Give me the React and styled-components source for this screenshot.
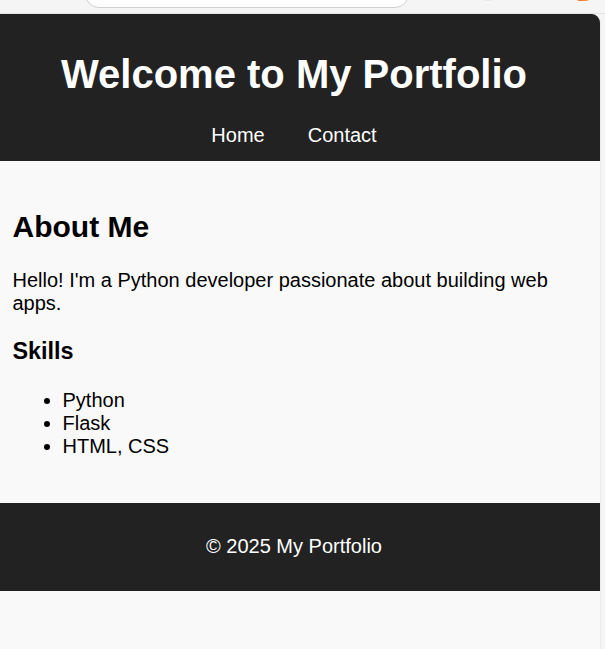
import React from 'react'
import styled, { createGlobalStyle } from 'styled-components'

const GlobalStyle = createGlobalStyle`
    html, body {
        margin: 0;
        padding: 0;
        background: #f3f3f3;
        font-family: "Liberation Sans", Arial, sans-serif;
    }
`;

// browser chrome sliver that shows at the very top of the shot
const TopBar = styled.div`
    height: 14px;
    border-bottom: 1px solid #e4e4e4;
    background: #f5f5f5;
    display: flex;
    align-items: flex-end;
    overflow: hidden;
    padding-bottom: 5px;
    box-sizing: border-box;
`;

const SearchPill = styled.div`
    margin-left: 85px;
    width: 324px;
    height: 30px;
    flex-shrink: 0;
    background: #fff;
    border: 1px solid #cfcfcf;
    border-radius: 14px;
    box-sizing: border-box;
`;

const ChromeCircle = styled.div`
    margin-left: 68px;
    width: 20px;
    height: 20px;
    flex-shrink: 0;
    border-radius: 50%;
    border: 1px solid #e6e6e6;
    background: #fafafa;
    margin-bottom: 7px;
`;

const ChromeBadge = styled.div`
    margin-left: 77px;
    width: 14px;
    height: 8px;
    flex-shrink: 0;
    border-radius: 0 0 4px 4px;
    background: linear-gradient(90deg, #f05a28, #f7b24a);
    margin-bottom: 7px;
`;

const Frame = styled.div`
    padding-right: 4px;
    background: #f5f5f5;
`;

const Page = styled.div`
    background: #f9f9f9;
    border-top-right-radius: 9px;
    overflow: hidden;
    min-height: 635px;
    border-right: 1px solid #ececec;
`;

const Header = styled.header`
    background: #222;
    color: #fff;
    text-align: center;
    padding: 38px 12px 14px 0;
`;

const Title = styled.h1`
    font-size: 40px;
    font-weight: bold;
    margin: 0 0 26.8px;
`;

const Nav = styled.nav`
    display: flex;
    justify-content: center;
    gap: 43px;
`;

const NavLink = styled.a`
    color: #fff;
    text-decoration: none;
    font-size: 20px;
`;

const Main = styled.main`
    padding: 49px 12.5px 25px;
    color: #000;
`;

const Heading = styled.h2`
    font-size: 30px;
    margin: 0 0 25px;
`;

const Text = styled.p`
    font-size: 20px;
    margin: 0 0 20px;
`;

const SubHeading = styled.h3`
    font-size: 23.4px;
    margin: 23.4px 0;
`;

const SkillList = styled.ul`
    font-size: 20px;
    margin: 0 0 20px;
    padding-left: 50px;
`;

const Footer = styled.footer`
    background: #222;
    color: #fff;
    text-align: center;
    font-size: 20px;
    padding: 32.5px 12px 32.5px 0;
`;

const skills = ['Python', 'Flask', 'HTML, CSS']

const App = () => (
    <>
        <GlobalStyle />
        <TopBar>
            <SearchPill />
            <ChromeCircle />
            <ChromeBadge />
        </TopBar>
        <Frame>
            <Page>
                <Header>
                    <Title>Welcome to My Portfolio</Title>
                    <Nav>
                        <NavLink href="#">Home</NavLink>
                        <NavLink href="#">Contact</NavLink>
                    </Nav>
                </Header>
                <Main>
                    <Heading>About Me</Heading>
                    <Text>Hello! I'm a Python developer passionate about building web apps.</Text>
                    <SubHeading>Skills</SubHeading>
                    <SkillList>
                        {skills.map(s => <li key={s}>{s}</li>)}
                    </SkillList>
                </Main>
                <Footer>© 2025 My Portfolio</Footer>
            </Page>
        </Frame>
    </>
)

export default App
